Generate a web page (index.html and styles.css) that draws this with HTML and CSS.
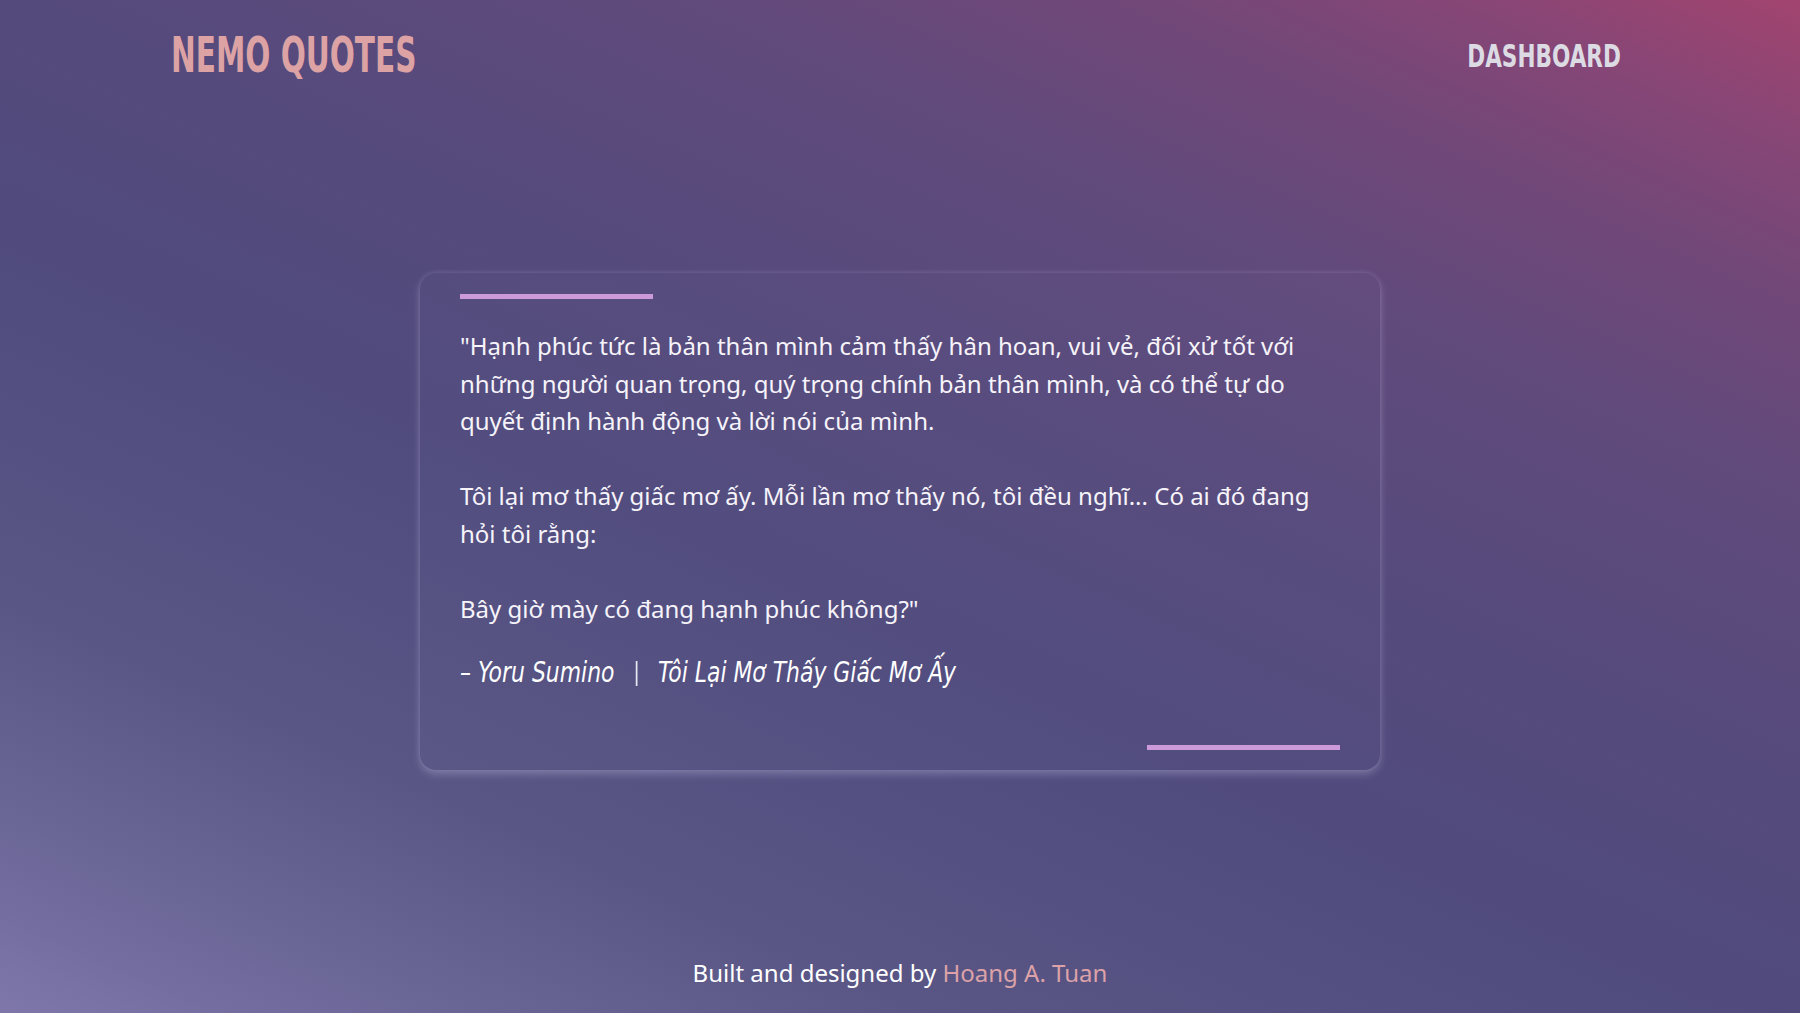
FILE: index.html
```html
<!DOCTYPE html>
<html lang="vi">
<head>
<meta charset="utf-8">
<title>Nemo Quotes</title>
<link rel="stylesheet" href="styles.css">
</head>
<body>
<div class="page">
  <header class="header">
    <a class="logo" href="#"><span class="logo-text">NEMO QUOTES</span></a>
    <a class="nav-link" href="#"><span class="nav-text">DASHBOARD</span></a>
  </header>
  <main class="main">
    <section class="card">
      <div class="bar"></div>
      <p class="quote">"Hạnh phúc tức là bản thân mình cảm thấy hân hoan, vui vẻ, đối xử tốt với những người quan trọng, quý trọng chính bản thân mình, và có thể tự do quyết định hành động và lời nói của mình.

Tôi lại mơ thấy giấc mơ ấy. Mỗi lần mơ thấy nó, tôi đều nghĩ... Có ai đó đang hỏi tôi rằng:

Bây giờ mày có đang hạnh phúc không?"</p>
      <div class="author"><div class="author-inner"><span class="author-name">– Yoru Sumino</span><span class="sep"></span><span class="book">Tôi Lại Mơ Thấy Giấc Mơ Ấy</span></div></div>
      <div class="bar-row"><div class="bar"></div></div>
    </section>
  </main>
  <footer class="footer">
    <p class="credit">Built and designed by <a class="credit-link" href="#">Hoang A. Tuan</a></p>
  </footer>
</div>
</body>
</html>
```
FILE: styles.css
```css
* { box-sizing: border-box; }
html, body { margin: 0; padding: 0; height: 100%; }
body {
  font-family: "Noto Sans", "Open Sans", sans-serif;
  color: #ffffff;
  background: linear-gradient(24deg,
    #7f77aa 0%,
    #6a6696 11%,
    #595685 23%,
    #524e80 37%,
    #514b7d 44%,
    #564a7c 58%,
    #614a7c 73%,
    #724878 84%,
    #874676 92%,
    #a2446f 100%);
  overflow: hidden;
}
a { text-decoration: none; }
.page {
  display: flex;
  flex-direction: column;
  height: 1013px;
}
.header {
  height: 110px;
  flex: none;
  display: flex;
  align-items: center;
  justify-content: space-between;
  padding: 0 179px 0 171px;
}
.logo {
  color: #dca2a4;
  font-family: "DejaVu Sans Condensed", "Liberation Sans", sans-serif;
  font-weight: 700;
  font-size: 49px;
  line-height: 1;
  width: 243px;
  display: block;
}
.logo-text {
  display: inline-block;
  transform: scaleX(0.67);
  transform-origin: left center;
  white-space: nowrap;
}
.nav-link {
  color: #dcdbe4;
  font-family: "DejaVu Sans Condensed", "Liberation Sans", sans-serif;
  font-weight: 700;
  font-size: 32px;
  line-height: 1;
  width: 148px;
  display: flex;
  justify-content: flex-end;
  margin-top: 2px;
}
.nav-text {
  display: inline-block;
  transform: scaleX(0.75);
  transform-origin: right center;
  white-space: nowrap;
}
.main {
  flex: 1;
  display: flex;
  align-items: center;
  justify-content: center;
}
.card {
  width: 960px;
  height: 497px;
  padding: 21px 40px 20px;
  border-radius: 16px;
  background: rgba(255, 255, 255, 0.015);
  box-shadow: 0 4px 9px rgba(225, 225, 255, 0.28), 0 -1px 4px rgba(225, 225, 255, 0.12);
  display: flex;
  flex-direction: column;
}
.bar {
  width: 193px;
  height: 5px;
  background: #cc9ad8;
  flex: none;
}
.quote {
  margin: 28px 0 0;
  font-size: 24px;
  line-height: 37.5px;
  white-space: pre-line;
  color: #f6f4fa;
}
.author {
  margin-top: 26px;
  font-family: "DejaVu Sans Condensed", "Liberation Sans", sans-serif;
  font-style: italic;
  font-size: 28px;
  line-height: 40px;
  color: #ffffff;
}
.author-inner {
  display: inline-flex;
  align-items: center;
  white-space: nowrap;
  transform: scaleX(0.87);
  transform-origin: left center;
}
.sep {
  width: 2px;
  height: 25px;
  background: #e8e6f0;
  margin: 0 24px 0 24px;
}
.bar-row {
  margin-top: auto;
  display: flex;
  justify-content: flex-end;
}
.footer {
  height: 80px;
  flex: none;
  display: flex;
  align-items: center;
  justify-content: center;
}
.credit {
  margin: 0;
  font-size: 24px;
  line-height: 1.2;
  color: #ffffff;
}
.credit-link { color: #dca2a8; }
```
